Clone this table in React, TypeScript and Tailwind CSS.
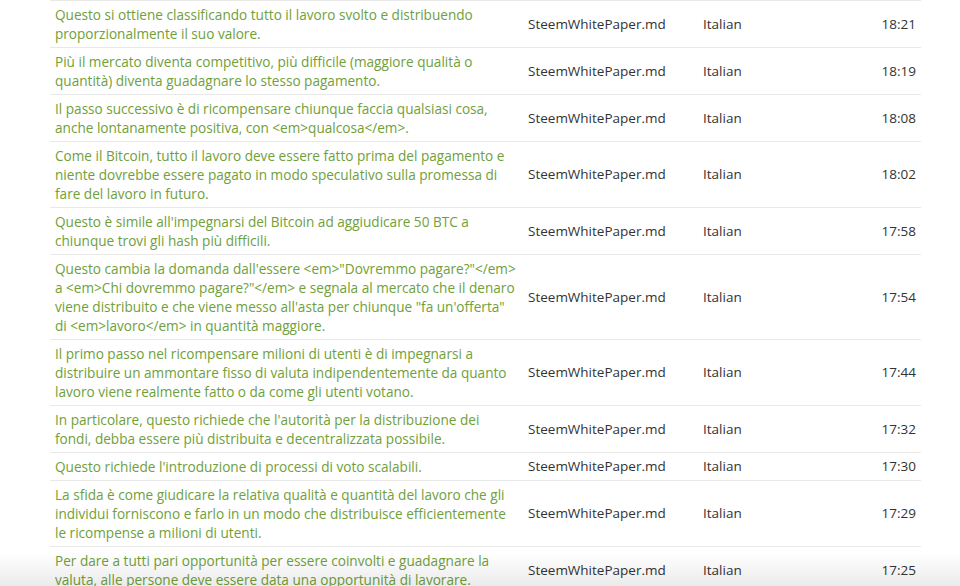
const rows: { lines: string[]; time: string }[] = [
  {
    lines: ["Questo si ottiene classificando tutto il lavoro svolto e distribuendo", "proporzionalmente il suo valore."],
    time: "18:21",
  },
  {
    lines: ["Più il mercato diventa competitivo, più difficile (maggiore qualità o", "quantità) diventa guadagnare lo stesso pagamento."],
    time: "18:19",
  },
  {
    lines: ["Il passo successivo è di ricompensare chiunque faccia qualsiasi cosa,", "anche lontanamente positiva, con <em>qualcosa</em>."],
    time: "18:08",
  },
  {
    lines: [
      "Come il Bitcoin, tutto il lavoro deve essere fatto prima del pagamento e",
      "niente dovrebbe essere pagato in modo speculativo sulla promessa di",
      "fare del lavoro in futuro.",
    ],
    time: "18:02",
  },
  {
    lines: ["Questo è simile all'impegnarsi del Bitcoin ad aggiudicare 50 BTC a", "chiunque trovi gli hash più difficili."],
    time: "17:58",
  },
  {
    lines: [
      "Questo cambia la domanda dall'essere <em>\"Dovremmo pagare?\"</em>",
      "a <em>Chi dovremmo pagare?\"</em> e segnala al mercato che il denaro",
      "viene distribuito e che viene messo all'asta per chiunque \"fa un'offerta\"",
      "di <em>lavoro</em> in quantità maggiore.",
    ],
    time: "17:54",
  },
  {
    lines: [
      "Il primo passo nel ricompensare milioni di utenti è di impegnarsi a",
      "distribuire un ammontare fisso di valuta indipendentemente da quanto",
      "lavoro viene realmente fatto o da come gli utenti votano.",
    ],
    time: "17:44",
  },
  {
    lines: ["In particolare, questo richiede che l'autorità per la distribuzione dei", "fondi, debba essere più distribuita e decentralizzata possibile."],
    time: "17:32",
  },
  {
    lines: ["Questo richiede l'introduzione di processi di voto scalabili."],
    time: "17:30",
  },
  {
    lines: [
      "La sfida è come giudicare la relativa qualità e quantità del lavoro che gli",
      "individui forniscono e farlo in un modo che distribuisce efficientemente",
      "le ricompense a milioni di utenti.",
    ],
    time: "17:29",
  },
  {
    lines: ["Per dare a tutti pari opportunità per essere coinvolti e guadagnare la", "valuta, alle persone deve essere data una opportunità di lavorare."],
    time: "17:25",
  },
]

export default function App() {
  return (
    <div className="relative h-[586px] w-[960px] overflow-hidden bg-white font-['Open_Sans',_'Liberation_Sans',_sans-serif] leading-[19px]">
      <div className="ml-[50px] w-[871px] border-t border-[#e9e9e9]">
        {rows.map((row, i) => (
          <div
            key={i}
            className="grid grid-cols-[473px_175px_1fr_100px] items-center border-b border-[#e9e9e9] py-[4px]"
          >
            <div className="px-[5px] text-[13.6px] text-[#6fa03a]">
              {row.lines.map((line, j) => (
                <div key={j} className="whitespace-nowrap">
                  {line}
                </div>
              ))}
            </div>
            <div className="px-[5px] text-[13.5px] text-[#333333]">SteemWhitePaper.md</div>
            <div className="px-[5px] text-[13.5px] text-[#333333]">Italian</div>
            <div className="px-[5px] text-right text-[13.5px] text-[#333333]">{row.time}</div>
          </div>
        ))}
      </div>
      {/* ombra in basso, sopra la tabella */}
      <div className="pointer-events-none absolute bottom-0 left-0 h-[34px] w-full bg-gradient-to-b from-transparent to-[rgba(0,0,0,0.08)]" />
    </div>
  )
}
